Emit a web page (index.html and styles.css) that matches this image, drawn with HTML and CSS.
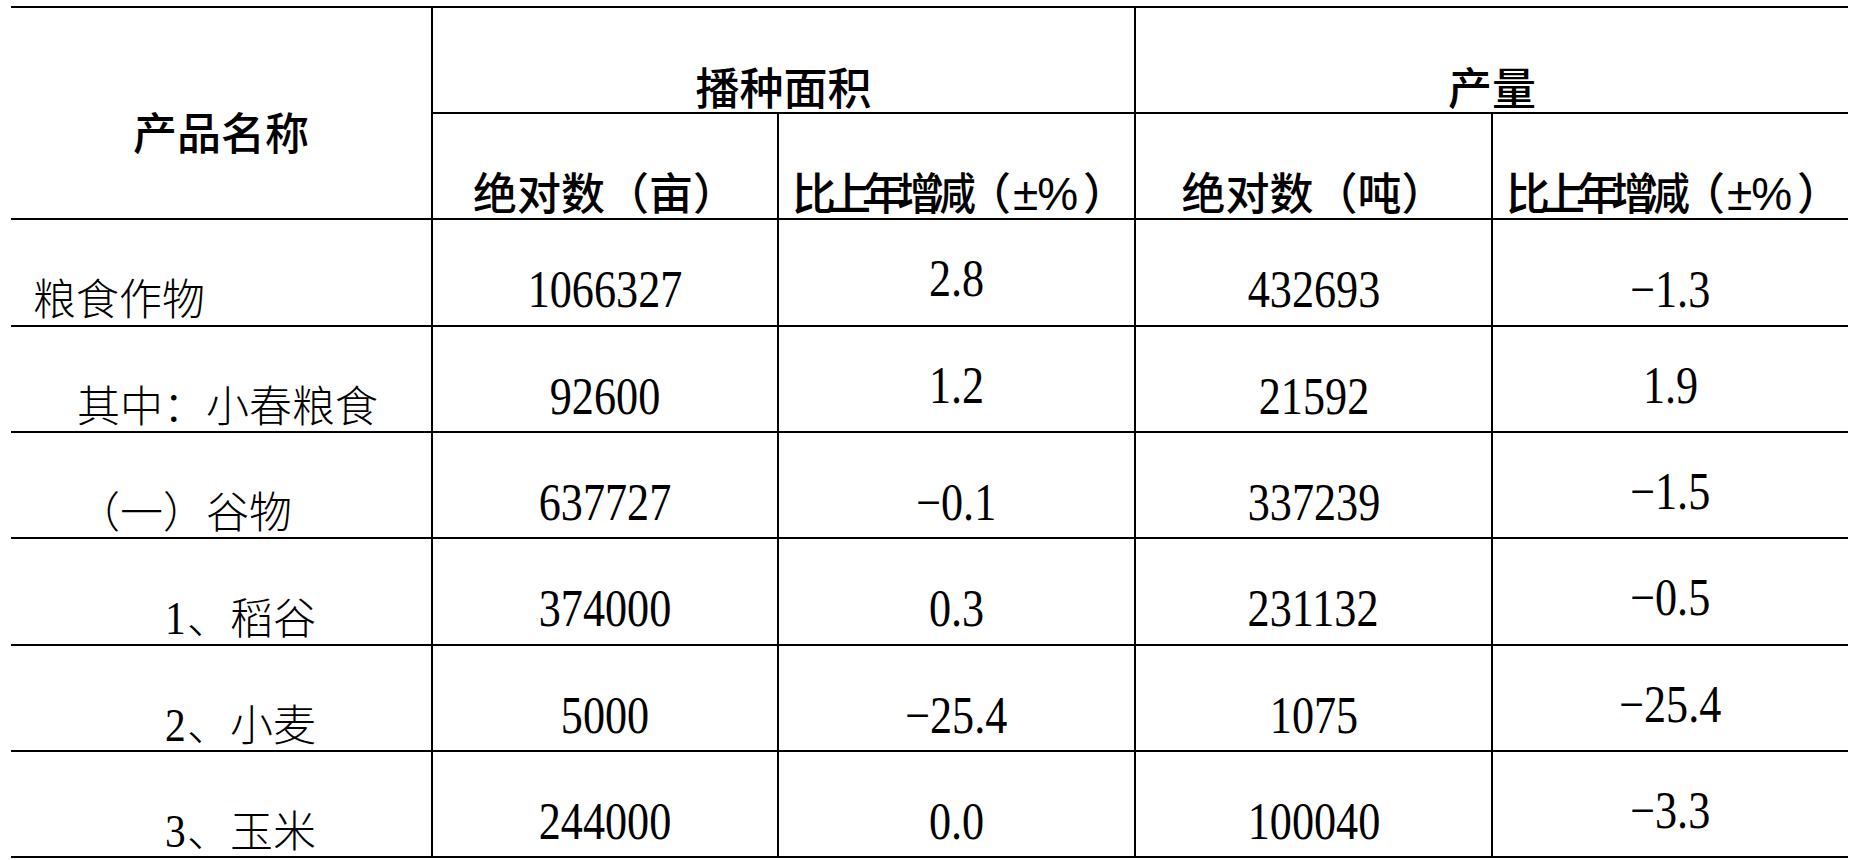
FILE: index.html
```html
<!DOCTYPE html>
<html lang="zh-CN">
<head>
<meta charset="utf-8">
<title>主要农产品播种面积及产量</title>
<link rel="stylesheet" href="styles.css">
</head>
<body>
<table class="t">
  <colgroup>
    <col class="c1"><col class="c2"><col class="c3"><col class="c4"><col class="c5">
  </colgroup>
  <thead>
    <tr class="hr1">
      <th class="name" rowspan="2">产品名称</th>
      <th class="grp" colspan="2">播种面积</th>
      <th class="grp" colspan="2">产量</th>
    </tr>
    <tr class="hr2">
      <th class="sub">绝对数（亩）</th>
      <th class="sub"><span class="sq">比上年增减</span><span class="pct">（<span class="pm">±%</span>）</span></th>
      <th class="sub">绝对数（吨）</th>
      <th class="sub"><span class="sq">比上年增减</span><span class="pct">（<span class="pm">±%</span>）</span></th>
    </tr>
  </thead>
  <tbody>
    <tr class="ra">
      <td class="lab i0">粮食作物</td>
      <td class="num"><span>1066327</span></td>
      <td class="num hi"><span>2.8</span></td>
      <td class="num"><span>432693</span></td>
      <td class="num"><span>−1.3</span></td>
    </tr>
    <tr class="rb">
      <td class="lab i1">其中：小春粮食</td>
      <td class="num"><span>92600</span></td>
      <td class="num hi"><span>1.2</span></td>
      <td class="num"><span>21592</span></td>
      <td class="num hi"><span>1.9</span></td>
    </tr>
    <tr class="rb">
      <td class="lab i1">（一）谷物</td>
      <td class="num"><span>637727</span></td>
      <td class="num"><span>−0.1</span></td>
      <td class="num"><span>337239</span></td>
      <td class="num hi"><span>−1.5</span></td>
    </tr>
    <tr class="ra">
      <td class="lab i2"><span class="d">1</span>、稻谷</td>
      <td class="num"><span>374000</span></td>
      <td class="num"><span>0.3</span></td>
      <td class="num"><span>231132</span></td>
      <td class="num hi"><span>−0.5</span></td>
    </tr>
    <tr class="rb">
      <td class="lab i2"><span class="d">2</span>、小麦</td>
      <td class="num"><span>5000</span></td>
      <td class="num"><span>−25.4</span></td>
      <td class="num"><span>1075</span></td>
      <td class="num hi"><span>−25.4</span></td>
    </tr>
    <tr class="rb">
      <td class="lab i2"><span class="d">3</span>、玉米</td>
      <td class="num"><span>244000</span></td>
      <td class="num"><span>0.0</span></td>
      <td class="num"><span>100040</span></td>
      <td class="num hi"><span>−3.3</span></td>
    </tr>
  </tbody>
</table>
</body>
</html>
```

FILE: styles.css
```css
html, body {
  margin: 0;
  padding: 0;
  background: #fff;
  color: #000;
}

.t {
  border-collapse: collapse;
  table-layout: fixed;
  width: 1837px;
  margin: 6px 0 0 11px;
}

.c1 { width: 421px; }
.c2 { width: 346px; }
.c3 { width: 357px; }
.c4 { width: 357px; }
.c5 { width: 356px; }

.t th,
.t td {
  padding: 0;
  border-top: 2px solid #000;
  border-left: 2px solid #000;
  vertical-align: top;
  white-space: nowrap;
  overflow: visible;
}

.t .name,
.t .lab {
  border-left: none;
}

.t tbody tr:last-child td {
  border-bottom: 2px solid #000;
}

.hr1 { height: 106px; }
.hr2 { height: 106px; }
.ra { height: 107px; }
.rb { height: 106px; }

/* header cells */
.t th {
  font-family: "Noto Sans CJK SC", "Noto Sans", sans-serif;
  font-weight: 500;
  font-size: 44px;
  line-height: 44px;
  text-align: center;
}

.t .name {
  padding-top: 101px;
}

.t .grp {
  padding-top: 56px;
}

.t .sub {
  padding-top: 55px;
}

.sq {
  letter-spacing: -9px;
}

.pct {
  letter-spacing: -6px;
}

.pm {
  font-family: "Liberation Sans", "Noto Sans", sans-serif;
  font-size: 46px;
  letter-spacing: -1px;
  padding: 0 6px 0 8px;
}

/* label cells */
.t .lab {
  font-family: "Noto Sans CJK SC", "Noto Sans", sans-serif;
  font-weight: 300;
  font-size: 43px;
  line-height: 43px;
  padding-top: 55px;
  text-align: left;
}

.t .i0 { padding-left: 22px; }
.t .i1 { padding-left: 66px; }
.t .i2 { padding-left: 154px; }

.lab .d {
  font-family: "Liberation Serif", serif;
  font-size: 46px;
  line-height: 0;
  display: inline-block;
  width: 22px;
  transform: scaleX(0.9);
  transform-origin: left center;
}

/* number cells */
.t .num {
  font-family: "Liberation Serif", serif;
  font-size: 52px;
  line-height: 52px;
  text-align: center;
  padding-top: 44px;
}

.t .num.hi {
  padding-top: 33px;
}

.num span {
  display: inline-block;
  transform: scaleX(0.85);
  transform-origin: center center;
}
```
